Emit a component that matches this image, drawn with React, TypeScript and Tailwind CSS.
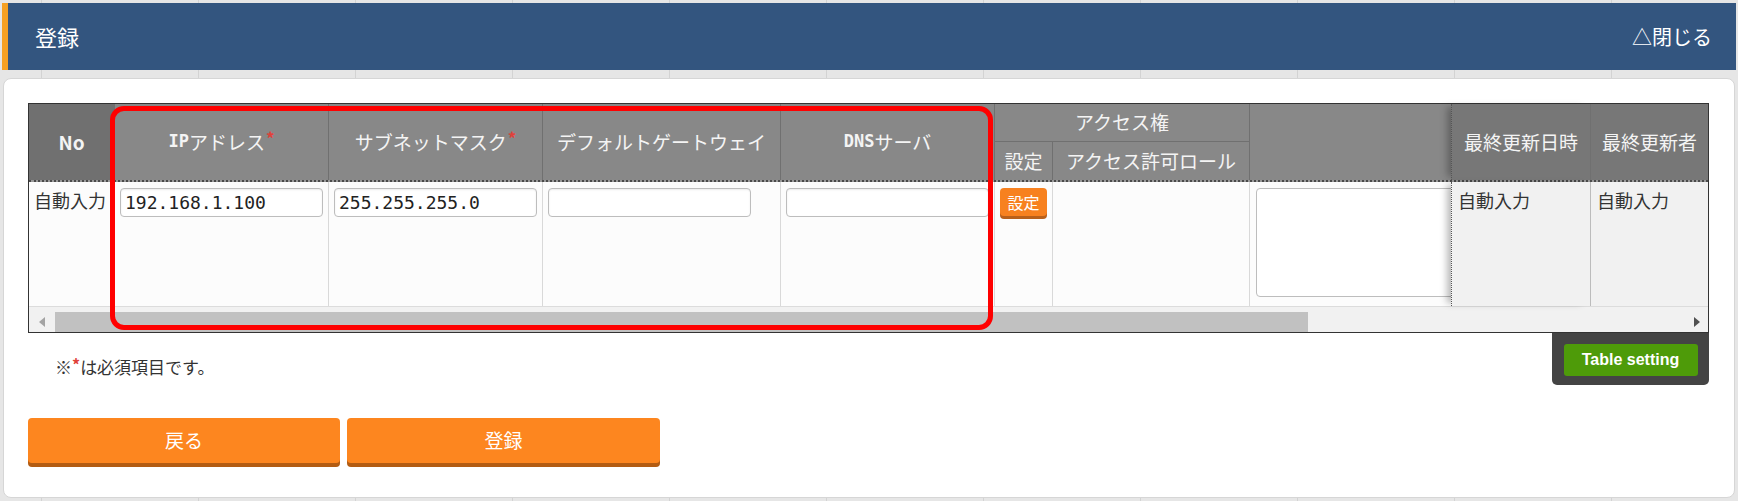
import React from 'react';

const GRID = 'grid grid-cols-[86px_214px_214px_238px_214px_58px_197px_201px_140px_117px]';
const HEAD = 'flex items-center justify-center border-r border-[#707070] text-[19px] text-[#f4f4f4]';
const CELL = 'border-r border-[#d9d9d9] bg-[#fcfcfc]';
const FIXED_SHADOW = 'relative z-10 [border-left-style:dotted] border-l border-l-[#555] shadow-[-7px_0_7px_-3px_rgba(0,0,0,0.28)]';

const Req = () => <span className="ml-[1px] -mt-[8px] text-[17px] font-bold text-[#e0413a]">*</span>;

function TextInput({ value = '' }: { value?: string }) {
  return (
    <input
      defaultValue={value}
      className="ml-[5px] mt-[6px] h-[29px] w-[203px] rounded-[4px] border border-[#bdbdbd] bg-white px-[4px] font-['DejaVu_Sans_Mono',monospace] text-[18px] text-[#222] shadow-[inset_0_1px_2px_rgba(0,0,0,0.08)] outline-none"
    />
  );
}

const App: React.FC = () => {
  return (
    <div className="h-[501px] w-[1738px] overflow-hidden bg-[#e6e6e6] bg-[repeating-linear-gradient(90deg,#e6e6e6_0_41px,#d3d3d3_41px_42px,#e6e6e6_42px_157px)] pt-[3px] font-['Noto_Sans_CJK_JP',sans-serif]">
      {/* page header */}
      <div className="mx-[2px] flex h-[67px] items-center justify-between border-l-[6px] border-[#f5a023] bg-[#33557f] pl-[27px] pr-[24px] text-white">
        <span className="text-[22px]">登録</span>
        <span className="text-[20px]">△閉じる</span>
      </div>

      <div className="mx-[3px] mt-[8px] h-[420px] rounded-[8px] border border-[#d6d6d6] bg-white pl-[24px] pt-[24px]">
        {/* table */}
        <div className="relative w-[1681px] border border-[#333] bg-white">
          <div className={`${GRID} grid-rows-[38px_38px] border-b-2 border-dotted border-[#4a4a4a] bg-[#999]`}>
            <div className={`${HEAD} row-span-2 bg-[#707070] font-bold`}>No</div>
            <div className={`${HEAD} row-span-2 bg-[#888]`}>
              <b className="font-['DejaVu_Sans_Mono',monospace] text-[17px]">IP</b>アドレス<Req />
            </div>
            <div className={`${HEAD} row-span-2 bg-[#888]`}>
              サブネットマスク<Req />
            </div>
            <div className={`${HEAD} row-span-2 bg-[#888]`}>デフォルトゲートウェイ</div>
            <div className={`${HEAD} row-span-2 bg-[#888]`}>
              <b className="font-['DejaVu_Sans_Mono',monospace] text-[17px]">DNS</b>サーバ
            </div>
            <div className={`${HEAD} col-span-2 border-b bg-[#888]`}>アクセス権</div>
            <div className={`${HEAD} row-span-2 border-r-0 bg-[#888]`} />
            <div className={`${HEAD} ${FIXED_SHADOW} row-span-2 bg-[#777]`}>最終更新日時</div>
            <div className={`${HEAD} relative z-10 row-span-2 border-r-0 bg-[#777]`}>最終更新者</div>
            <div className={`${HEAD} bg-[#888]`}>設定</div>
            <div className={`${HEAD} bg-[#888]`}>アクセス許可ロール</div>
          </div>

          <div className={`${GRID} h-[125px] border-b border-[#dcdcdc] text-[18px] leading-[26px] text-[#333]`}>
            <div className={`${CELL} bg-[#f8f8f8] pl-[5px] pt-[5px]`}>自動入力</div>
            <div className={CELL}>
              <TextInput value="192.168.1.100" />
            </div>
            <div className={CELL}>
              <TextInput value="255.255.255.0" />
            </div>
            <div className={CELL}>
              <TextInput />
            </div>
            <div className={CELL}>
              <TextInput />
            </div>
            <div className={CELL}>
              <button className="ml-[5px] mt-[6px] flex h-[28px] w-[47px] items-center justify-center rounded-[4px] bg-[#f7811f] text-[16px] leading-none text-white shadow-[0_3px_0_#b9601a]">
                設定
              </button>
            </div>
            <div className={CELL} />
            <div className="bg-[#fcfcfc]">
              <textarea className="ml-[6px] mt-[6px] h-[109px] w-[230px] resize-none rounded-[4px] border border-[#bdbdbd] bg-white outline-none" />
            </div>
            <div className={`${FIXED_SHADOW} border-r border-r-[#bcbcbc] bg-[#f1f1f1] pl-[6px] pt-[5px]`}>自動入力</div>
            <div className="relative z-10 bg-[#f1f1f1] pl-[6px] pt-[5px]">自動入力</div>
          </div>

          {/* horizontal scrollbar */}
          <div className="flex h-[25px] items-end bg-[#f1f1f1]">
            <div className="flex h-[20px] w-[26px] items-center justify-center">
              <svg width="6" height="10" viewBox="0 0 6 10">
                <path d="M6 0 L0 5 L6 10 Z" fill="#a3a3a3" />
              </svg>
            </div>
            <div className="h-[20px] w-[1253px] bg-[#c1c1c1]" />
            <div className="flex-1" />
            <div className="flex h-[20px] w-[22px] items-center justify-center">
              <svg width="6" height="10" viewBox="0 0 6 10">
                <path d="M0 0 L6 5 L0 10 Z" fill="#505050" />
              </svg>
            </div>
          </div>

          {/* highlight frame */}
          <div className="pointer-events-none absolute left-[81px] top-[2px] h-[224px] w-[883px] rounded-[14px] border-[5px] border-[#ff0000]" />
        </div>

        <div className="flex w-[1681px] items-start justify-between">
          <p className="ml-[27px] mt-[24px] text-[17px] leading-[20px] text-[#333]">
            ※<span className="relative -top-[3px] text-[16px] font-bold text-[#e0413a]">*</span>は必須項目です。
          </p>
          <div className="flex h-[52px] w-[157px] justify-center rounded-b-[5px] bg-[#444] pt-[11px]">
            <button className="h-[32px] w-[134px] rounded-[3px] bg-[#4e9b09] font-['Liberation_Sans',sans-serif] text-[16px] font-bold text-white">
              Table setting
            </button>
          </div>
        </div>

        <div className="mt-[33px] flex gap-[7px]">
          <button className="h-[45px] w-[312px] rounded-[4px] bg-[#fd861f] text-[19px] text-white shadow-[0_4px_0_#b35c12]">
            戻る
          </button>
          <button className="h-[45px] w-[313px] rounded-[4px] bg-[#fd861f] text-[19px] text-white shadow-[0_4px_0_#b35c12]">
            登録
          </button>
        </div>
      </div>
    </div>
  );
};

export default App;
